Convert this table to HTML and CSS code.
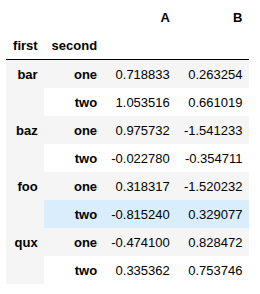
FILE: index.html
```html
<!DOCTYPE html>
<html>
<head>
<meta charset="utf-8">
<link rel="stylesheet" href="styles.css">
</head>
<body>
<div class="output">
<table class="dataframe">
<thead>
<tr><th></th><th></th><th>A</th><th>B</th></tr>
<tr><th>first</th><th>second</th><th></th><th></th></tr>
</thead>
<tbody>
<tr><th rowspan="2">bar</th><th>one</th><td>0.718833</td><td>0.263254</td></tr>
<tr><th>two</th><td>1.053516</td><td>0.661019</td></tr>
<tr><th rowspan="2">baz</th><th>one</th><td>0.975732</td><td>-1.541233</td></tr>
<tr><th>two</th><td>-0.022780</td><td>-0.354711</td></tr>
<tr><th rowspan="2">foo</th><th>one</th><td>0.318317</td><td>-1.520232</td></tr>
<tr class="hover"><th>two</th><td>-0.815240</td><td>0.329077</td></tr>
<tr><th rowspan="2">qux</th><th>one</th><td>-0.474100</td><td>0.828472</td></tr>
<tr><th>two</th><td>0.335362</td><td>0.753746</td></tr>
</tbody>
</table>
</div>
</body>
</html>
```
FILE: styles.css
```css
html, body {
  margin: 0;
  padding: 0;
  background: #fff;
}
.output {
  padding: 3px 0 0 6px;
}
.dataframe {
  width: 243px;
  border: none;
  border-collapse: collapse;
  border-spacing: 0;
  color: #000;
  font-family: "Liberation Sans", Arial, sans-serif;
  font-size: 13px;
}
.dataframe thead {
  border-bottom: 1px solid #000;
  vertical-align: bottom;
}
.dataframe th,
.dataframe td {
  text-align: right;
  vertical-align: middle;
  padding: 6.5px;
  line-height: 15px;
  white-space: nowrap;
  border: none;
}
.dataframe th {
  font-weight: bold;
}
.dataframe tbody th {
  vertical-align: top;
}
.dataframe tbody tr:nth-child(odd) {
  background: #f5f5f5;
}
.dataframe tbody tr.hover {
  background: rgba(66, 165, 245, 0.2);
}
```
